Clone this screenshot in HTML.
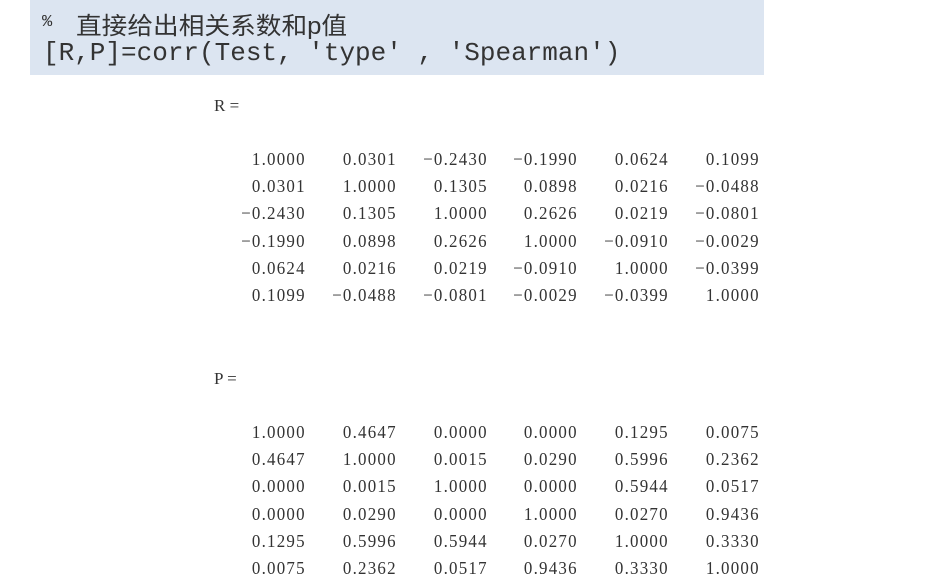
<!DOCTYPE html>
<html><head><meta charset="utf-8"><style>
body{margin:0;width:943px;height:587px;background:#fff;overflow:hidden;position:relative}
.box{position:absolute;left:30px;top:0;width:734px;height:75px;background:#dce5f1}
.pc{position:absolute;left:42px;top:13px;font:17px "Liberation Mono",monospace;color:#333}
.c1{position:absolute;left:76px;top:6px;font:24px "Liberation Sans","Noto Sans CJK SC",sans-serif;color:#333;white-space:pre;transform:scaleX(1.07);transform-origin:left}
.c2{position:absolute;left:43px;top:38px;font:26px "Liberation Mono",monospace;color:#333;white-space:pre}
.lbl{position:absolute;left:214px;font:17px "Liberation Serif",serif;color:#333;white-space:pre}
.m{position:absolute;left:215px;font:18px "Liberation Serif",serif;color:#333;line-height:27.2px}
.m div{height:27.2px;white-space:nowrap}
.m span{display:inline-block;width:90.8px;text-align:right;letter-spacing:1.3px;transform:scaleX(0.94);transform-origin:right}
</style></head><body>
<div class="box"></div>
<div class="pc">%</div>
<div class="c1">直接给出相关系数和p值</div>
<div class="c2">[R,P]=corr(Test, 'type' , 'Spearman')</div>
<div class="lbl" style="top:96px">R =</div>
<div class="m" style="top:146px">
<div><span>1.0000</span><span>0.0301</span><span>−0.2430</span><span>−0.1990</span><span>0.0624</span><span>0.1099</span></div>
<div><span>0.0301</span><span>1.0000</span><span>0.1305</span><span>0.0898</span><span>0.0216</span><span>−0.0488</span></div>
<div><span>−0.2430</span><span>0.1305</span><span>1.0000</span><span>0.2626</span><span>0.0219</span><span>−0.0801</span></div>
<div><span>−0.1990</span><span>0.0898</span><span>0.2626</span><span>1.0000</span><span>−0.0910</span><span>−0.0029</span></div>
<div><span>0.0624</span><span>0.0216</span><span>0.0219</span><span>−0.0910</span><span>1.0000</span><span>−0.0399</span></div>
<div><span>0.1099</span><span>−0.0488</span><span>−0.0801</span><span>−0.0029</span><span>−0.0399</span><span>1.0000</span></div>
</div>
<div class="lbl" style="top:369px">P =</div>
<div class="m" style="top:419px">
<div><span>1.0000</span><span>0.4647</span><span>0.0000</span><span>0.0000</span><span>0.1295</span><span>0.0075</span></div>
<div><span>0.4647</span><span>1.0000</span><span>0.0015</span><span>0.0290</span><span>0.5996</span><span>0.2362</span></div>
<div><span>0.0000</span><span>0.0015</span><span>1.0000</span><span>0.0000</span><span>0.5944</span><span>0.0517</span></div>
<div><span>0.0000</span><span>0.0290</span><span>0.0000</span><span>1.0000</span><span>0.0270</span><span>0.9436</span></div>
<div><span>0.1295</span><span>0.5996</span><span>0.5944</span><span>0.0270</span><span>1.0000</span><span>0.3330</span></div>
<div><span>0.0075</span><span>0.2362</span><span>0.0517</span><span>0.9436</span><span>0.3330</span><span>1.0000</span></div>
</div>
</body></html>
